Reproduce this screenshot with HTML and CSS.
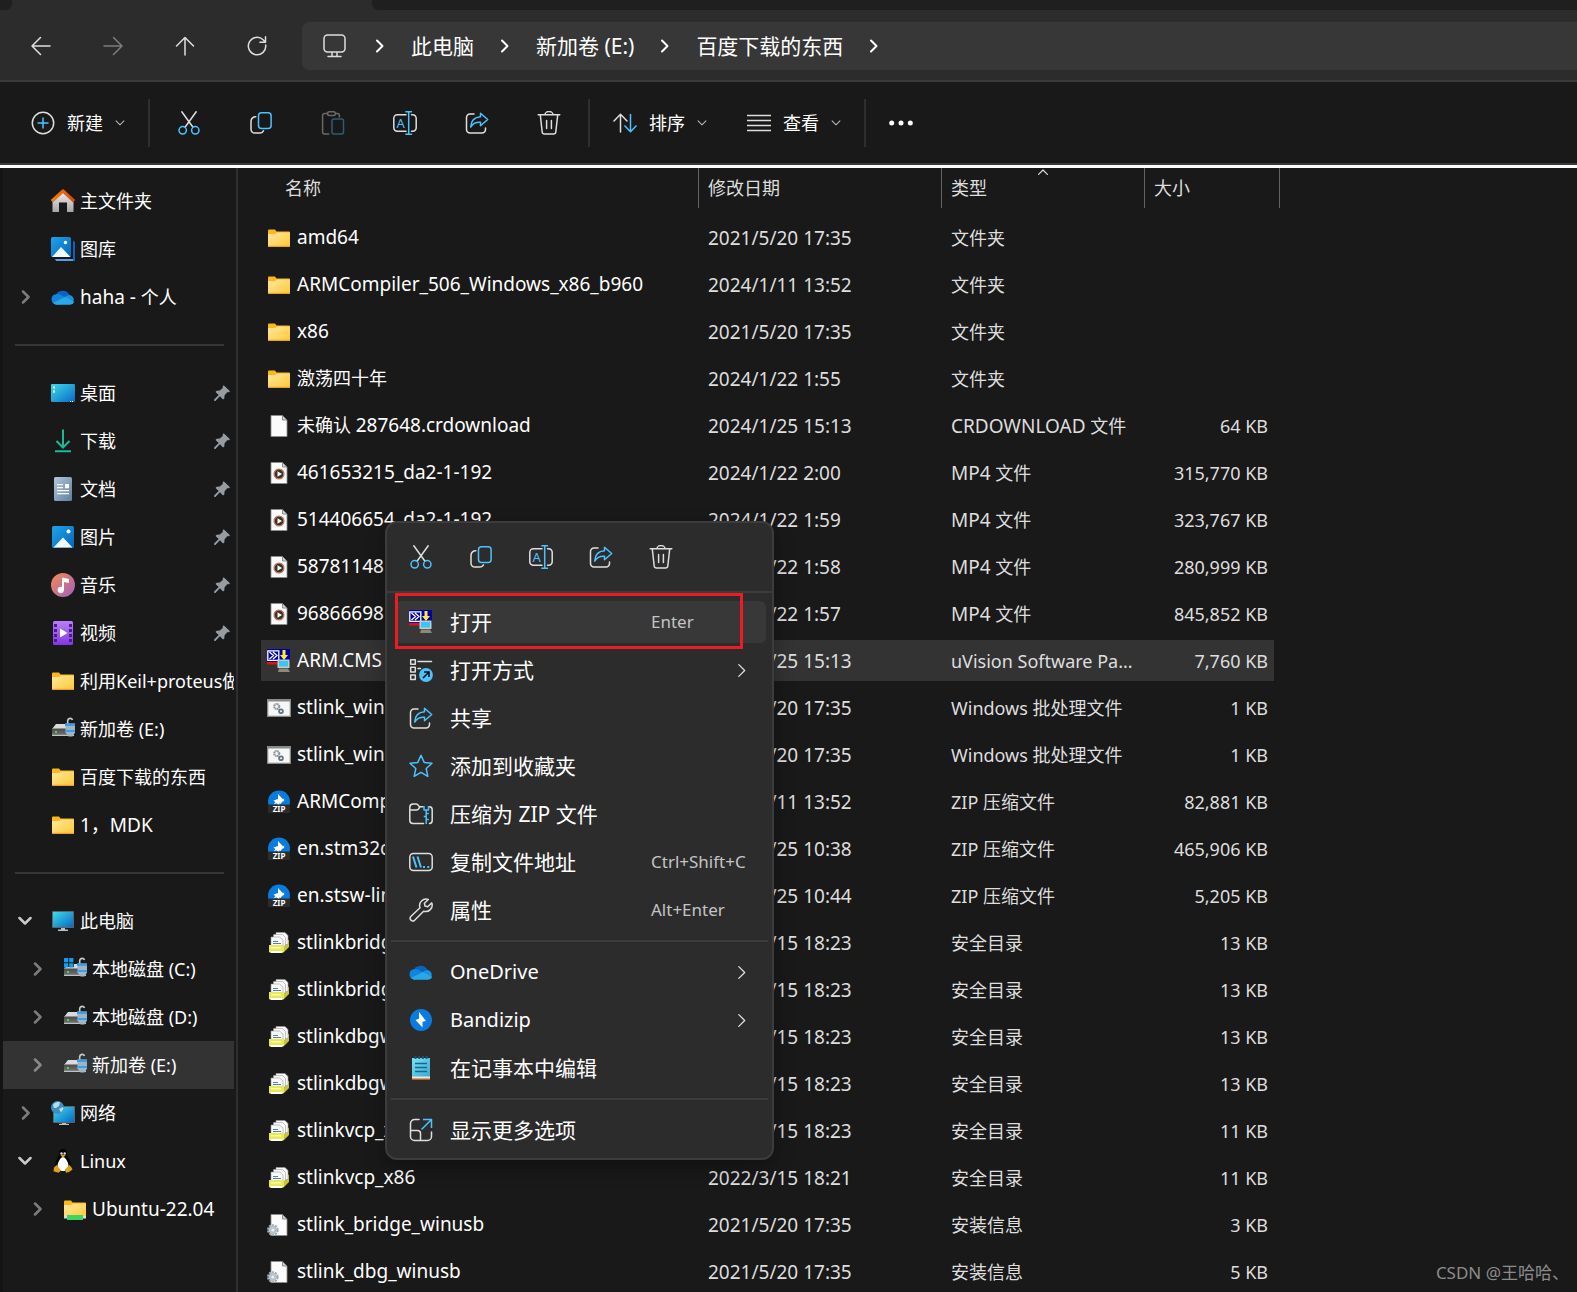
FILE: index.html
```
<!DOCTYPE html>
<html lang="zh-CN">
<head>
    <meta charset="UTF-8">
    <meta name="viewport" content="width=device-width, initial-scale=1.0">
    <title>百度下载的东西</title>
    <link rel="stylesheet" href="styles.css">
</head>
<body>
    <!-- Icon sprite -->
    <svg class="sprite" width="0" height="0" aria-hidden="true">
        <defs>
            <linearGradient id="g-folder" x1="0" y1="0" x2="1" y2="1"><stop offset="0" stop-color="#ffe7a2"/><stop offset="1" stop-color="#ffc835"/></linearGradient>
            <linearGradient id="g-blue" x1="0" y1="0" x2="1" y2="1"><stop offset="0" stop-color="#1fa4e8"/><stop offset="1" stop-color="#0565bd"/></linearGradient>
            <linearGradient id="g-screen" x1="0" y1="0" x2="1" y2="1"><stop offset="0" stop-color="#3bdcea"/><stop offset="1" stop-color="#0a68c4"/></linearGradient>
            <linearGradient id="g-music" x1="0" y1="0" x2="1" y2="1"><stop offset="0" stop-color="#f58b50"/><stop offset="1" stop-color="#a25dc0"/></linearGradient>
            <linearGradient id="g-video" x1="0" y1="0" x2="0" y2="1"><stop offset="0" stop-color="#b880f5"/><stop offset="1" stop-color="#8337e0"/></linearGradient>
            <linearGradient id="g-doc" x1="0" y1="0" x2="1" y2="1"><stop offset="0" stop-color="#b3c8dc"/><stop offset="1" stop-color="#5f7e9e"/></linearGradient>
            <linearGradient id="g-house" x1="0" y1="0" x2="0" y2="1"><stop offset="0" stop-color="#ececec"/><stop offset="1" stop-color="#a6a6a8"/></linearGradient>
            <linearGradient id="g-roof" x1="0" y1="0" x2="1" y2="0"><stop offset="0" stop-color="#f5820b"/><stop offset="1" stop-color="#d9480b"/></linearGradient>
            <linearGradient id="g-drive" x1="0" y1="0" x2="0" y2="1"><stop offset="0" stop-color="#4a4a4a"/><stop offset="1" stop-color="#777"/></linearGradient>
            <linearGradient id="g-note" x1="0" y1="0" x2="1" y2="1"><stop offset="0" stop-color="#7fe0f5"/><stop offset="1" stop-color="#3aa9cf"/></linearGradient>
        </defs>

        <!-- Line icons -->
        <symbol id="i-back" viewBox="0 0 24 24"><path class="w" d="M21 12H3.500M11.500 3.500 3 12l8.500 8.500"/></symbol>
        <symbol id="i-forward" viewBox="0 0 24 24"><path class="w" d="M3 12h17.500M12.500 3.500 21 12l-8.500 8.500"/></symbol>
        <symbol id="i-up" viewBox="0 0 24 24"><path class="w" d="M12 21V3.500M3.500 12 12 3.500l8.500 8.500"/></symbol>
        <symbol id="i-refresh" viewBox="0 0 24 24"><path class="w" d="M20.700 11a8.700 8.700 0 1 1-2.600-5.200l1.900 1.900M20.500 2.700v5.600h-5.600"/></symbol>
        <symbol id="i-monitor" viewBox="0 0 26 26"><rect class="w" x="2" y="2" width="21" height="17" rx="3.500"/><path class="w" d="M10 19.500V23M15 19.500V23M6 23.500h13"/></symbol>
        <symbol id="i-chev-r" viewBox="0 0 10 14"><path class="w" d="M2 1.500 7.500 7 2 12.500"/></symbol>
        <symbol id="i-chev-d" viewBox="0 0 14 10"><path class="w" d="M1.500 2 7 7.500 12.500 2"/></symbol>
        <symbol id="i-new" viewBox="0 0 24 24"><circle class="w" cx="12" cy="12" r="10.700"/><path class="b" d="M12 6.500v11M6.500 12h11"/></symbol>
        <symbol id="i-cut" viewBox="0 0 24 24"><path class="w" d="M4.800.8 15.800 16M19.200.8 8.200 16"/><circle class="b" cx="5.700" cy="19.300" r="3.700"/><circle class="b" cx="18.300" cy="19.300" r="3.700"/></symbol>
        <symbol id="i-copy" viewBox="0 0 24 24"><path class="w" d="M6.800 5.800A4.500 4.500 0 0 0 2 10v8.300A3.700 3.700 0 0 0 5.700 22h4.800a4.500 4.500 0 0 0 4-2.200"/><rect class="b" x="9.500" y="1.700" width="12.600" height="15.800" rx="3"/></symbol>
        <symbol id="i-paste" viewBox="0 0 24 24"><path class="w" d="M6.500 2.500H3.600a2 2 0 0 0-2 2V21a2 2 0 0 0 2 2h4.200M14.500 2.500h1.900a2 2 0 0 1 2 2V6"/><rect class="w" x="6.500" y=".8" width="8" height="3.600" rx="1.800"/><rect class="b" x="11" y="8" width="11.500" height="15" rx="2"/></symbol>
        <symbol id="i-rename" viewBox="0 0 24 24"><path class="w" d="M13 3.700H4.300A3.500 3.500 0 0 0 .8 7.200v9.600a3.500 3.500 0 0 0 3.500 3.500H13M18.500 3.700h1.200a3.500 3.500 0 0 1 3.500 3.500v9.600a3.500 3.500 0 0 1-3.500 3.500h-1.200"/><path class="b" d="M15.700 1v22M12.300.8h6.800M12.300 23.200h6.800"/><text class="icon-letter" x="3.500" y="16.500">A</text></symbol>
        <symbol id="i-share" viewBox="0 0 24 24"><path class="w" d="M9 3H5a3.500 3.500 0 0 0-3.500 3.500v12A3.500 3.500 0 0 0 5 22h12a3.500 3.500 0 0 0 3.500-3.500V17"/><path class="b" d="M15.500 2.200 22.700 8.500l-7.200 6.300v-3.500c-4.500-.3-7.500 1-9.800 4.700.3-6 3.800-9.800 9.800-10.200z"/></symbol>
        <symbol id="i-trash" viewBox="0 0 24 24"><path class="w" d="M1.200 3.800h21.600M8 3.600a4 3 0 0 1 8 0M3.300 4l1.900 17a2.300 2.300 0 0 0 2.300 2h9a2.300 2.300 0 0 0 2.300-2l1.900-17M9.600 9.500v8M14.400 9.500v8"/></symbol>
        <symbol id="i-sort" viewBox="0 0 24 24"><path class="w" d="M7.500 21V3.500M1 10l6.500-6.700L14 10"/><path class="b" d="M17.500 3v17.500M11.500 14.500l6 6.200 6-6.200"/></symbol>
        <symbol id="i-view" viewBox="0 0 24 24"><path class="w" d="M0 4.500h24M0 9.500h24M0 14.500h24M0 19.500h24"/></symbol>
        <symbol id="i-dots" viewBox="0 0 24 24"><circle fill="#fff" cx="2.700" cy="12" r="2.500"/><circle fill="#fff" cx="12" cy="12" r="2.500"/><circle fill="#fff" cx="21.300" cy="12" r="2.500"/></symbol>
        <symbol id="i-openwith" viewBox="0 0 24 24"><rect class="w" x="1.700" y="1.700" width="4.600" height="4.600"/><rect class="w" x="1.700" y="9.300" width="4.600" height="4.600"/><rect class="w" x="1.700" y="17" width="4.600" height="4.600"/><path class="w" d="M9 3.500h13.500M9 10.500h2.500"/><circle cx="17" cy="17" r="6.900" fill="#4cc2ff"/><path d="M14 20l5.800-5.800M15 14h5v5" fill="none" stroke="#111" stroke-width="1.600"/></symbol>
        <symbol id="i-star" viewBox="0 0 24 24"><path class="b" d="m12 1.200 3.200 7.200 7.800.8-5.800 5.300 1.600 7.800-6.800-4-6.800 4 1.600-7.800L1 9.200l7.800-.8z"/></symbol>
        <symbol id="i-zipfolder" viewBox="0 0 24 24"><path class="w" d="M14 4.800h-3.500L8.700 2.600A2.500 2.500 0 0 0 6.800 2H4A3.300 3.300 0 0 0 .8 5.200v13A3.300 3.300 0 0 0 4 21.500h10.500M.8 8h6.500a3 3 0 0 0 2.200-1l1.300-2M20.500 4.800a3 3 0 0 1 2.700 3v10.700a3 3 0 0 1-2.700 3"/><path class="b" d="M15 4v4h4.500V4M17.200 8v14M17.200 11.500h2.600M14.800 14.500h2.400M17.200 17.500h2.600"/></symbol>
        <symbol id="i-path" viewBox="0 0 24 24"><rect class="w" x=".8" y="3.500" width="22.400" height="17" rx="3.500"/><path class="b thick" d="M4 6.500l3.500 11M8.500 6.500l3.500 11M14 17h2M18.300 17h2"/></symbol>
        <symbol id="i-wrench" viewBox="0 0 24 24"><path class="w" d="M19.300 1.500a6.500 6.500 0 0 0-8.300 8.300L1.800 18.500a2.700 2.700 0 0 0 3.800 3.800l9-9.100a6.500 6.500 0 0 0 8.200-8.300l-4 3.800-2.800-.6-.6-2.800z"/></symbol>
        <symbol id="i-more" viewBox="0 0 24 24"><path class="w" d="M10 1.500H5.500a4 4 0 0 0-4 4v13a4 4 0 0 0 4 4h13a4 4 0 0 0 4-4V14M1.500 12.500h7a3 3 0 0 1 3 3v7"/><path class="b" d="M12.500 11.500 22 2M14 1.500h8.500V10"/></symbol>
        <symbol id="i-pin" viewBox="0 0 16 16"><path fill="#959da3" d="M9.700.3 16 6.200l-1.200 1-1.600.1-2.700 3.200-.2 3-1.200 1.100-3.200-3.300L1.400 16 0 15.700.1 14.400l4.600-4.300L1.500 6.900l1.200-1.200 3.100-.1L8.700 3l.1-1.700z"/></symbol>

        <!-- Colour icons -->
        <symbol id="c-home" viewBox="0 0 24 24"><path fill="url(#g-house)" d="M12 3 1.500 12.500V23H8v-9.500h8V23h6.500V12.500z"/><path fill="none" stroke="url(#g-roof)" stroke-width="3.200" stroke-linejoin="round" d="M.8 12.200 12 2l11.200 10.200"/></symbol>
        <symbol id="c-gallery" viewBox="0 0 24 24"><path fill="#5c9de0" d="M4 22h18v2H5z"/><path fill="#1163b8" d="M22 3.500 24 5v19h-2z"/><rect width="20" height="20" rx="1.500" fill="url(#g-blue)"/><circle cx="14.500" cy="5.500" r="1.700" fill="#fff"/><path fill="#eef8ff" d="M1 20 10 10l9.500 10z"/></symbol>
        <symbol id="c-onedrive" viewBox="0 0 24 24"><path fill="#0a63be" d="M4.500 11A7.500 7.500 0 0 1 18.500 10l-4 4z"/><path fill="#1184de" d="M5 9.200c3-.6 5 .5 9 3.200L8 19.500H5A5.200 5.200 0 0 1 5 9.200z"/><path fill="#1593e6" d="M12 13l5-2.800a5 5 0 0 1 5.500 7z"/><path fill="#28a8ea" d="M2 18l12-6 9.200 5a4.800 4.800 0 0 1-4.200 2.700H5A5 5 0 0 1 2 18z"/></symbol>
        <symbol id="c-desktop" viewBox="0 0 24 24"><rect y="3" width="24" height="18" rx="1" fill="url(#g-screen)"/><path fill="#fff" d="M2 5.500h2v2H2zM2 9.500h2v2H2zM19 20h1v1h-1zM21 20h1v1h-1z"/></symbol>
        <symbol id="c-download" viewBox="0 0 24 24"><path fill="none" stroke="#1fb894" stroke-width="2" d="M12 .5v17M5.500 12l6.500 6.500 6.500-6.500M4 22.300h16"/></symbol>
        <symbol id="c-document" viewBox="0 0 24 24"><rect x="3" width="18" height="24" rx="1.500" fill="url(#g-doc)"/><path fill="#fff" d="M6 7h6v1.300H6zM6 10h6v1.300H6zM14 7h4v4.300h-4zM6 13h12v1.300H6zM6 16h12v1.300H6z"/></symbol>
        <symbol id="c-picture" viewBox="0 0 24 24"><rect x="1" y="1" width="22" height="22" rx="1.500" fill="url(#g-blue)"/><circle cx="17.500" cy="6.500" r="2" fill="#fff"/><path fill="#f2f9ff" d="M2.500 22.500 12 12.500l9.500 10z"/></symbol>
        <symbol id="c-music" viewBox="0 0 24 24"><circle cx="12" cy="12" r="12" fill="url(#g-music)"/><path fill="#fff" d="M11 4.500 18 6v4l-5-1v8a3.200 3.200 0 1 1-2-3z"/></symbol>
        <symbol id="c-video" viewBox="0 0 24 24"><rect x="2" width="20" height="24" rx="1.500" fill="url(#g-video)"/><path fill="#4b1a8c" d="M3 3h3v3H3zM3 8h3v3H3zM3 13h3v3H3zM3 18h3v3H3zM18 3h3v3h-3zM18 8h3v3h-3zM18 13h3v3h-3zM18 18h3v3h-3z"/><path fill="#fff" d="M9 7.500v9L16.500 12z"/></symbol>
        <symbol id="c-folder" viewBox="0 0 24 24"><path fill="#fcb71c" d="M1 4.500A1 1 0 0 1 2 3.500h6l1.500 2H22a1 1 0 0 1 1 1V12H1z"/><path fill="url(#g-folder)" d="M1 8h7l2-1.500h13V20a1 1 0 0 1-1 1H2a1 1 0 0 1-1-1z"/><path fill="#e4a52a" d="M1 19.800h22V20a1 1 0 0 1-1 1H2a1 1 0 0 1-1-1z"/></symbol>
        <symbol id="c-drive" viewBox="0 0 24 24"><path fill="#d9dadd" d="M5 7h18v5H1z"/><rect x="1" y="11.500" width="22" height="7.500" rx="1" fill="url(#g-drive)"/><path fill="#bfc1c4" d="M1 17.800h22V19H1z"/><path fill="#37e03c" d="M4 14h2v2H4z"/><path fill="none" stroke="#c3ccd2" stroke-width="1.600" d="M16.700 7V3.500a2.500 2.500 0 0 1 4.800-.5"/><path fill="#9fb4c4" d="M14.500 6.500h9.500v9l-2.500 4h-4l-3-4z"/><path fill="#3c9fe6" d="M14 6.500h10v2.500H14zM14 13h10v2H14z"/></symbol>
        <symbol id="c-drive-sys" viewBox="0 0 24 24"><use href="#c-drive"/><path fill="#1a1a1a" d="M0 0h11v10H0z"/><path fill="#139cf0" d="M1 1h4.200v4.200H1zM6.200 1h4.200v4.200H6.200zM1 6.200h4.200v4.200H1zM6.200 6.200h4.200v4.200H6.200z"/></symbol>
        <symbol id="c-pc" viewBox="0 0 24 24"><rect x="1" y="2" width="22" height="17" rx="1" fill="#59666e"/><rect x="2" y="3" width="20" height="15" fill="url(#g-screen)"/><path fill="#b9c0c5" d="M10 19h4v1.500h3V22H7v-1.500h3z"/></symbol>
        <symbol id="c-network" viewBox="0 0 24 24"><rect x="2" y="5" width="22" height="17" rx="1" fill="#59666e"/><rect x="3" y="6" width="20" height="15" fill="url(#g-screen)"/><path fill="#b9c0c5" d="M11 22h4v.7h3V24H8v-1.300h3z"/><circle cx="6.500" cy="6.500" r="6.500" fill="#3f8fbd"/><path fill="#b9dcec" d="M2 4c2-3 5-3.500 7-2.500L8 5 5 7 3 7zM8 8l4-2 .5 2-2.500 3.500z"/></symbol>
        <symbol id="c-tux" viewBox="0 0 24 24"><path fill="#050505" d="M12 0c3 0 4.200 2.200 4.200 5 0 3 3.800 6.500 3.800 11.500l-2 5.500H6l-2-5.500C4 11.500 7.800 8 7.800 5c0-2.800 1.200-5 4.200-5z"/><path fill="#fff" d="M12 8c2 0 5.500 5 5.500 9 0 3.500-2.500 5-5.500 5s-5.500-1.500-5.500-5c0-4 3.500-9 5.500-9z"/><circle cx="10.500" cy="4.500" r="1.200" fill="#ddd"/><circle cx="13.700" cy="4.500" r="1.200" fill="#ddd"/><path fill="#e0a01a" d="M9.500 6.500 12 5.500l2.700 1-2.700 2zM5.500 16l4.500 5.500-2.500 2.200-5-1.500.5-3.700zM18.500 16 14 20.500l1 3.200 3-.7 3.500-2.500-1-2z"/></symbol>
        <symbol id="c-folder-net" viewBox="0 0 24 24"><use href="#c-folder"/><path fill="#dcdcdc" d="M1 19h22v2.500H1z"/><path fill="#3fd65f" d="M4 18h16v5H4z"/></symbol>
        <symbol id="c-file" viewBox="0 0 24 24"><path fill="#fbfbfb" stroke="#8d8d8d" stroke-width=".8" d="M4 1.500h11.500l4.500 4.500V22.500H4z"/><path fill="#d3d3d3" stroke="#777" stroke-width=".8" d="M15.500 1.500V6H20z"/></symbol>
        <symbol id="c-mp4" viewBox="0 0 24 24"><use href="#c-file"/><circle cx="12" cy="13" r="4.900" fill="#333" stroke="#c97650" stroke-width="1.300"/><path fill="#fff" d="M10.500 10.300v5.400L15 13z"/></symbol>
        <symbol id="c-keil" viewBox="0 0 24 24"><path fill="#0000a8" d="M0 0h23v13H0z"/><path fill="#e01010" d="M0 13h13v2.500H0z"/><path fill="none" stroke="#fff" stroke-width="1.300" d="M.8 1.800h11v9.500H.8zM2.500 3l4 3.500-4 3.500M6 3l4 3.500L6 10"/><path fill="#ffee30" d="M15.500 1h3v5H21l-4 5-4-5h2.500z"/><path fill="#c9c9c9" d="M10.500 10.500h12v8.500h-12z"/><path fill="#35c8f5" d="M12 12h9v5.500h-9z"/><path fill="#8f8878" d="M12 19.500h9l2 3.500H11z"/></symbol>
        <symbol id="c-bat" viewBox="0 0 24 24"><path fill="#8a8a86" d="M0 3h24v18H0z"/><path fill="#f5f7f8" d="M1.300 5.500h21.400v14.200H1.300z"/><circle cx="9.700" cy="10.500" r="2.500" fill="none" stroke="#8b979f" stroke-width="2.200" stroke-dasharray="1.500 .5"/><circle cx="14" cy="15.300" r="1.900" fill="none" stroke="#66747d" stroke-width="1.800"/></symbol>
        <symbol id="c-zip" viewBox="0 0 24 24"><circle cx="12" cy="11.500" r="11" fill="#0a7ce0"/><path fill="#fff" d="M11.300 4l1.500 5.300 4.700-.6-4 5.300-1.800-1.500-5.200 2 5-6z"/><path fill="#fff" d="M11 4v5l-4.500 1.500 6 5.500v-4l5-1z"/><rect x="1" y="14.500" width="22" height="8.500" rx="1" fill="#2c2c2c"/><text class="zip-letter" x="12" y="21.800">ZIP</text></symbol>
        <symbol id="c-cat" viewBox="0 0 24 24"><path fill="#c6c637" d="M17 12l5-3.500v7.500L17 21z"/><path fill="#fafafa" stroke="#9b9b9b" stroke-width=".6" d="M9 1.500h9l3 3v9H9z"/><path fill="#fafafa" stroke="#9b9b9b" stroke-width=".6" d="M6.500 3.500h9l3 3V15h-12z"/><path fill="#fafafa" stroke="#9b9b9b" stroke-width=".6" d="M4 6h8.500l3.500 3v6H4z"/><path stroke="#4c83bd" d="M6 10.500h5M6 12.500h8"/><path fill="#e9e857" d="M2 14h15v7.300H2z"/><path fill="#fff" d="M3.500 20h12v2h-12z"/><path fill="#fbf9ae" d="M4 16h10v1.500H4z"/></symbol>
        <symbol id="c-inf" viewBox="0 0 24 24"><use href="#c-file"/><circle cx="5.800" cy="17" r="4.600" fill="none" stroke="#9faab4" stroke-width="2.400" stroke-dasharray="2 .9"/><circle cx="5.800" cy="17" r="4.200" fill="#b8c3cc"/><circle cx="5.800" cy="17" r="1.500" fill="#eee"/></symbol>
        <symbol id="c-bandizip" viewBox="0 0 24 24"><circle cx="12" cy="12" r="11" fill="#0a7ce0"/><path fill="#fff" d="M10 4v6.800L6.500 12l7 7.500v-5.700l3.500-.8z"/></symbol>
        <symbol id="c-notepad" viewBox="0 0 24 24"><path fill="#b55f16" d="M3 22h18v2H3z"/><path fill="#e9e9e9" d="M3 20h18v2.500H3z"/><path fill="url(#g-note)" d="M3 2h18v18.500H3z"/><path stroke="#0d6c8e" stroke-width="1.600" d="M6 7.500h12M6 11.500h12M6 15.500h12"/><path stroke="#135b74" stroke-width="1.800" d="M6.500 0v3M10.200 0v3M13.900 0v3M17.600 0v3"/></symbol>
    </svg>

    <div class="explorer">
        <div class="tab-strip"><span class="tab"></span><span class="tab-active"></span><span class="tab tab-rest"></span></div>

        <nav class="nav-bar" aria-label="导航">
            <div class="nav-buttons">
                <button type="button" aria-label="后退"><svg class="icon"><use href="#i-back"/></svg></button>
                <button type="button" aria-label="前进" disabled><svg class="icon"><use href="#i-forward"/></svg></button>
                <button type="button" aria-label="向上"><svg class="icon"><use href="#i-up"/></svg></button>
                <button type="button" aria-label="刷新"><svg class="icon"><use href="#i-refresh"/></svg></button>
            </div>
            <div class="address">
                <svg class="icon-pc"><use href="#i-monitor"/></svg>
                <svg class="crumb-sep"><use href="#i-chev-r"/></svg>
                <a href="#">此电脑</a>
                <svg class="crumb-sep"><use href="#i-chev-r"/></svg>
                <a href="#">新加卷 (E:)</a>
                <svg class="crumb-sep"><use href="#i-chev-r"/></svg>
                <a href="#">百度下载的东西</a>
                <svg class="crumb-sep"><use href="#i-chev-r"/></svg>
            </div>
        </nav>

        <div class="toolbar">
            <button type="button" class="drop"><svg class="icon"><use href="#i-new"/></svg><span>新建</span><svg class="drop-arrow"><use href="#i-chev-d"/></svg></button>
            <span class="divider"></span>
            <button type="button" class="tool" aria-label="剪切"><svg class="icon"><use href="#i-cut"/></svg></button>
            <button type="button" class="tool" aria-label="复制"><svg class="icon"><use href="#i-copy"/></svg></button>
            <button type="button" class="tool" aria-label="粘贴" disabled><svg class="icon"><use href="#i-paste"/></svg></button>
            <button type="button" class="tool" aria-label="重命名"><svg class="icon"><use href="#i-rename"/></svg></button>
            <button type="button" class="tool" aria-label="共享"><svg class="icon"><use href="#i-share"/></svg></button>
            <button type="button" class="tool" aria-label="删除"><svg class="icon"><use href="#i-trash"/></svg></button>
            <span class="divider"></span>
            <button type="button" class="drop"><svg class="icon"><use href="#i-sort"/></svg><span>排序</span><svg class="drop-arrow"><use href="#i-chev-d"/></svg></button>
            <button type="button" class="drop"><svg class="icon"><use href="#i-view"/></svg><span>查看</span><svg class="drop-arrow"><use href="#i-chev-d"/></svg></button>
            <span class="divider"></span>
            <button type="button" class="tool more" aria-label="更多"><svg class="icon"><use href="#i-dots"/></svg></button>
        </div>

        <div class="content">
            <aside class="sidebar">
                <a href="#" class="side-item"><svg class="icon"><use href="#c-home"/></svg><span class="label">主文件夹</span></a>
                <a href="#" class="side-item"><svg class="icon"><use href="#c-gallery"/></svg><span class="label">图库</span></a>
                <a href="#" class="side-item"><svg class="twist"><use href="#i-chev-r"/></svg><svg class="icon"><use href="#c-onedrive"/></svg><span class="label"><span class="latin">haha - </span>个人</span></a>
                <hr>
                <a href="#" class="side-item"><svg class="icon"><use href="#c-desktop"/></svg><span class="label">桌面</span><svg class="pin"><use href="#i-pin"/></svg></a>
                <a href="#" class="side-item"><svg class="icon"><use href="#c-download"/></svg><span class="label">下载</span><svg class="pin"><use href="#i-pin"/></svg></a>
                <a href="#" class="side-item"><svg class="icon"><use href="#c-document"/></svg><span class="label">文档</span><svg class="pin"><use href="#i-pin"/></svg></a>
                <a href="#" class="side-item"><svg class="icon"><use href="#c-picture"/></svg><span class="label">图片</span><svg class="pin"><use href="#i-pin"/></svg></a>
                <a href="#" class="side-item"><svg class="icon"><use href="#c-music"/></svg><span class="label">音乐</span><svg class="pin"><use href="#i-pin"/></svg></a>
                <a href="#" class="side-item"><svg class="icon"><use href="#c-video"/></svg><span class="label">视频</span><svg class="pin"><use href="#i-pin"/></svg></a>
                <a href="#" class="side-item"><svg class="icon"><use href="#c-folder"/></svg><span class="label">利用Keil+proteus做</span></a>
                <a href="#" class="side-item"><svg class="icon"><use href="#c-drive"/></svg><span class="label">新加卷 (E:)</span></a>
                <a href="#" class="side-item"><svg class="icon"><use href="#c-folder"/></svg><span class="label">百度下载的东西</span></a>
                <a href="#" class="side-item"><svg class="icon"><use href="#c-folder"/></svg><span class="label latin">1，MDK</span></a>
                <hr>
                <a href="#" class="side-item"><svg class="twist open"><use href="#i-chev-d"/></svg><svg class="icon"><use href="#c-pc"/></svg><span class="label">此电脑</span></a>
                <a href="#" class="side-item child"><svg class="twist"><use href="#i-chev-r"/></svg><svg class="icon"><use href="#c-drive-sys"/></svg><span class="label">本地磁盘 (C:)</span></a>
                <a href="#" class="side-item child"><svg class="twist"><use href="#i-chev-r"/></svg><svg class="icon"><use href="#c-drive"/></svg><span class="label">本地磁盘 (D:)</span></a>
                <a href="#" class="side-item child current"><svg class="twist"><use href="#i-chev-r"/></svg><svg class="icon"><use href="#c-drive"/></svg><span class="label">新加卷 (E:)</span></a>
                <a href="#" class="side-item"><svg class="twist"><use href="#i-chev-r"/></svg><svg class="icon"><use href="#c-network"/></svg><span class="label">网络</span></a>
                <a href="#" class="side-item"><svg class="twist open"><use href="#i-chev-d"/></svg><svg class="icon"><use href="#c-tux"/></svg><span class="label">Linux</span></a>
                <a href="#" class="side-item child"><svg class="twist"><use href="#i-chev-r"/></svg><svg class="icon"><use href="#c-folder-net"/></svg><span class="label latin">Ubuntu-22.04</span></a>
            </aside>

            <main class="files">
                <table>
                    <colgroup><col class="col-name"><col class="col-date"><col class="col-type"><col class="col-size"></colgroup>
                    <thead>
                        <tr>
                            <th class="name"><div class="head">名称</div></th>
                            <th><div class="head">修改日期</div></th>
                            <th><div class="head">类型<svg class="sort-mark"><use href="#i-chev-d"/></svg></div></th>
                            <th><div class="head">大小</div></th>
                        </tr>
                    </thead>
                    <tbody>
                        <tr><td class="name"><svg class="icon"><use href="#c-folder"/></svg>amd64</td><td>2021/5/20 17:35</td><td class="type">文件夹</td><td class="size"></td></tr>
                        <tr><td class="name"><svg class="icon"><use href="#c-folder"/></svg>ARMCompiler_506_Windows_x86_b960</td><td>2024/1/11 13:52</td><td class="type">文件夹</td><td class="size"></td></tr>
                        <tr><td class="name"><svg class="icon"><use href="#c-folder"/></svg>x86</td><td>2021/5/20 17:35</td><td class="type">文件夹</td><td class="size"></td></tr>
                        <tr><td class="name cjk"><svg class="icon"><use href="#c-folder"/></svg>激荡四十年</td><td>2024/1/22 1:55</td><td class="type">文件夹</td><td class="size"></td></tr>
                        <tr><td class="name cjk"><svg class="icon"><use href="#c-file"/></svg>未确认 <span class="latin">287648.crdownload</span></td><td>2024/1/25 15:13</td><td class="type"><span class="latin">CRDOWNLOAD</span> 文件</td><td class="size">64 KB</td></tr>
                        <tr><td class="name"><svg class="icon"><use href="#c-mp4"/></svg>461653215_da2-1-192</td><td>2024/1/22 2:00</td><td class="type"><span class="latin">MP4</span> 文件</td><td class="size">315,770 KB</td></tr>
                        <tr><td class="name"><svg class="icon"><use href="#c-mp4"/></svg>514406654_da2-1-192</td><td>2024/1/22 1:59</td><td class="type"><span class="latin">MP4</span> 文件</td><td class="size">323,767 KB</td></tr>
                        <tr><td class="name"><svg class="icon"><use href="#c-mp4"/></svg>58781148</td><td>2024/1/22 1:58</td><td class="type"><span class="latin">MP4</span> 文件</td><td class="size">280,999 KB</td></tr>
                        <tr><td class="name"><svg class="icon"><use href="#c-mp4"/></svg>96866698</td><td>2024/1/22 1:57</td><td class="type"><span class="latin">MP4</span> 文件</td><td class="size">845,852 KB</td></tr>
                        <tr class="selected"><td class="name"><svg class="icon"><use href="#c-keil"/></svg>ARM.CMS</td><td>2024/1/25 15:13</td><td class="type">uVision Software Pa...</td><td class="size">7,760 KB</td></tr>
                        <tr><td class="name"><svg class="icon"><use href="#c-bat"/></svg>stlink_winusb</td><td>2021/5/20 17:35</td><td class="type">Windows 批处理文件</td><td class="size">1 KB</td></tr>
                        <tr><td class="name"><svg class="icon"><use href="#c-bat"/></svg>stlink_winusb</td><td>2021/5/20 17:35</td><td class="type">Windows 批处理文件</td><td class="size">1 KB</td></tr>
                        <tr><td class="name"><svg class="icon"><use href="#c-zip"/></svg>ARMCompiler</td><td>2024/1/11 13:52</td><td class="type">ZIP 压缩文件</td><td class="size">82,881 KB</td></tr>
                        <tr><td class="name"><svg class="icon"><use href="#c-zip"/></svg>en.stm32cube</td><td>2024/1/25 10:38</td><td class="type">ZIP 压缩文件</td><td class="size">465,906 KB</td></tr>
                        <tr><td class="name"><svg class="icon"><use href="#c-zip"/></svg>en.stsw-link</td><td>2024/1/25 10:44</td><td class="type">ZIP 压缩文件</td><td class="size">5,205 KB</td></tr>
                        <tr><td class="name"><svg class="icon"><use href="#c-cat"/></svg>stlinkbridge</td><td>2022/3/15 18:23</td><td class="type">安全目录</td><td class="size">13 KB</td></tr>
                        <tr><td class="name"><svg class="icon"><use href="#c-cat"/></svg>stlinkbridge</td><td>2022/3/15 18:23</td><td class="type">安全目录</td><td class="size">13 KB</td></tr>
                        <tr><td class="name"><svg class="icon"><use href="#c-cat"/></svg>stlinkdbgwinusb</td><td>2022/3/15 18:23</td><td class="type">安全目录</td><td class="size">13 KB</td></tr>
                        <tr><td class="name"><svg class="icon"><use href="#c-cat"/></svg>stlinkdbgwinusb</td><td>2022/3/15 18:23</td><td class="type">安全目录</td><td class="size">13 KB</td></tr>
                        <tr><td class="name"><svg class="icon"><use href="#c-cat"/></svg>stlinkvcp_x64</td><td>2022/3/15 18:23</td><td class="type">安全目录</td><td class="size">11 KB</td></tr>
                        <tr><td class="name"><svg class="icon"><use href="#c-cat"/></svg>stlinkvcp_x86</td><td>2022/3/15 18:21</td><td class="type">安全目录</td><td class="size">11 KB</td></tr>
                        <tr><td class="name"><svg class="icon"><use href="#c-inf"/></svg>stlink_bridge_winusb</td><td>2021/5/20 17:35</td><td class="type">安装信息</td><td class="size">3 KB</td></tr>
                        <tr><td class="name"><svg class="icon"><use href="#c-inf"/></svg>stlink_dbg_winusb</td><td>2021/5/20 17:35</td><td class="type">安装信息</td><td class="size">5 KB</td></tr>
                    </tbody>
                </table>
            </main>
        </div>

        <!-- Right click menu -->
        <div class="context-menu">
            <div class="quick">
                <button type="button" aria-label="剪切"><svg class="icon"><use href="#i-cut"/></svg></button>
                <button type="button" aria-label="复制"><svg class="icon"><use href="#i-copy"/></svg></button>
                <button type="button" aria-label="重命名"><svg class="icon"><use href="#i-rename"/></svg></button>
                <button type="button" aria-label="共享"><svg class="icon"><use href="#i-share"/></svg></button>
                <button type="button" aria-label="删除"><svg class="icon"><use href="#i-trash"/></svg></button>
            </div>
            <ul>
                <li><button type="button" class="active"><svg class="icon"><use href="#c-keil"/></svg><span>打开</span><kbd>Enter</kbd></button><span class="mark"></span></li>
                <li><button type="button"><svg class="icon"><use href="#i-openwith"/></svg><span>打开方式</span><svg class="sub"><use href="#i-chev-r"/></svg></button></li>
                <li><button type="button"><svg class="icon"><use href="#i-share"/></svg><span>共享</span></button></li>
                <li><button type="button"><svg class="icon"><use href="#i-star"/></svg><span>添加到收藏夹</span></button></li>
                <li><button type="button"><svg class="icon"><use href="#i-zipfolder"/></svg><span>压缩为 ZIP 文件</span></button></li>
                <li><button type="button"><svg class="icon"><use href="#i-path"/></svg><span>复制文件地址</span><kbd>Ctrl+Shift+C</kbd></button></li>
                <li><button type="button"><svg class="icon"><use href="#i-wrench"/></svg><span>属性</span><kbd>Alt+Enter</kbd></button></li>
                <li class="line"></li>
                <li><button type="button"><svg class="icon"><use href="#c-onedrive"/></svg><span class="app-name">OneDrive</span><svg class="sub"><use href="#i-chev-r"/></svg></button></li>
                <li><button type="button"><svg class="icon"><use href="#c-bandizip"/></svg><span class="app-name">Bandizip</span><svg class="sub"><use href="#i-chev-r"/></svg></button></li>
                <li><button type="button"><svg class="icon"><use href="#c-notepad"/></svg><span>在记事本中编辑</span></button></li>
                <li class="line"></li>
                <li><button type="button"><svg class="icon"><use href="#i-more"/></svg><span>显示更多选项</span></button></li>
            </ul>
        </div>

        <div class="watermark">CSDN @王哈哈、</div>
    </div>
</body>
</html>
```
FILE: styles.css
```
* {
    margin: 0;
    padding: 0;
    box-sizing: border-box;
}

body {
    font-family: "Noto Sans", "Noto Sans CJK SC", sans-serif;
    font-size: 18px;
    line-height: 24px;
    background: #191919;
    color: #fff;
    overflow: hidden;
}

a {
    color: inherit;
    text-decoration: none;
}

button {
    font: inherit;
    color: inherit;
    background: none;
    border: none;
}

svg {
    display: block;
    flex: none;
}

.sprite {
    position: absolute;
}

/* strokes shared by the line icons */
.w {
    fill: none;
    stroke: var(--line-color, #dedede);
    stroke-width: var(--line-width, 1.5);
    stroke-linecap: round;
    stroke-linejoin: round;
}

.b {
    fill: none;
    stroke: #4cc2ff;
    stroke-width: 1.5;
    stroke-linejoin: round;
}

.thick {
    stroke-width: 2;
}

.icon-letter {
    fill: #4cc2ff;
    font-size: 13px;
}

.zip-letter {
    fill: #fff;
    font-size: 8px;
    font-weight: bold;
    text-anchor: middle;
}

.icon {
    width: 24px;
    height: 24px;
}

.explorer {
    position: relative;
    display: flex;
    flex-direction: column;
    height: 100vh;
    overflow: hidden;
}

/* Tabs */
.tab-strip {
    display: flex;
    height: 10px;
    background: #2c2c2c;
}

.tab {
    width: 12px;
    background: #1f1f1f;
    border-bottom-right-radius: 6px;
}

.tab-active {
    width: 360px;
}

.tab-rest {
    flex: 1;
    border-radius: 0 0 0 6px;
}

/* Navigation */
.nav-bar {
    display: flex;
    align-items: center;
    height: 72px;
    padding: 2px 0 0 17px;
    background: #2c2c2c;
    border-bottom: 2px solid #3a3a3a;
}

.nav-buttons {
    display: flex;
    gap: 24px;
    width: 285px;
}

.nav-buttons button {
    display: flex;
    align-items: center;
    justify-content: center;
    width: 48px;
    height: 48px;
}

.nav-buttons button:disabled {
    opacity: 0.45;
}

.address {
    display: flex;
    flex: 1;
    align-items: center;
    gap: 26px;
    height: 48px;
    padding-left: 19px;
    background: #373737;
    border-radius: 7px 0 0 7px;
    font-size: 21px;
}

.icon-pc {
    width: 28px;
    height: 26px;
}

.crumb-sep {
    width: 10px;
    height: 14px;
    --line-color: #fff;
    --line-width: 2;
}

/* Toolbar */
.toolbar {
    display: flex;
    align-items: center;
    height: 83px;
    padding-left: 11px;
    border-bottom: 2px solid #3a3a3a;
}

.drop {
    display: flex;
    align-items: center;
    gap: 12px;
    height: 48px;
    padding: 0 20px;
}

.drop-arrow {
    width: 10px;
    height: 8px;
    opacity: 0.8;
}

.tool {
    display: flex;
    align-items: center;
    justify-content: center;
    width: 72px;
    height: 48px;
}

.tool.more {
    width: 64px;
}

.tool:disabled {
    opacity: 0.4;
}

.divider {
    width: 2px;
    height: 48px;
    margin: 0 3px;
    background: #2e2e2e;
}

/* Body */
.content {
    display: flex;
    flex: 1;
    min-height: 0;
    border-top: 3px solid #fff;
}

.sidebar {
    width: 238px;
    padding: 9px 2px 0 0;
    border-left: 3px solid #141414;
    border-right: 2px solid #2e2e2e;
    overflow: hidden;
}

.side-item {
    position: relative;
    display: flex;
    align-items: center;
    gap: 5px;
    height: 48px;
    padding-left: 48px;
}

.side-item.child {
    padding-left: 60px;
}

.side-item.current {
    background: #333;
}

.label {
    flex: 1;
    white-space: nowrap;
    overflow: hidden;
}

.twist {
    position: absolute;
    left: 18px;
    width: 10px;
    height: 14px;
    opacity: 0.5;
    --line-width: 2.5;
}

.child .twist {
    left: 30px;
}

.twist.open {
    left: 15px;
    width: 14px;
    height: 10px;
    opacity: 0.9;
}

.pin {
    width: 16px;
    height: 16px;
    margin-right: 4px;
}

.sidebar hr {
    height: 2px;
    margin: 23px 10px 23px 12px;
    border: none;
    background: #363636;
}

.latin {
    font-size: 19px;
}

/* File list */
.files {
    flex: 1;
    padding-left: 23px;
    overflow: hidden;
}

table {
    table-layout: fixed;
    width: 1019px;
    border-spacing: 0;
}

.col-name {
    width: 438px;
}

.col-date {
    width: 243px;
}

.col-type {
    width: 203px;
}

.col-size {
    width: 135px;
}

th {
    height: 46px;
    font-weight: normal;
    text-align: left;
    vertical-align: top;
    color: #dedede;
}

.head {
    position: relative;
    height: 40px;
    padding: 8px 9px 0;
    border-right: 1px solid #636363;
}

th.name .head {
    padding-left: 24px;
}

.sort-mark {
    position: absolute;
    top: 0;
    left: 95px;
    width: 12px;
    height: 8px;
    transform: rotate(180deg);
}

td {
    height: 47px;
    padding: 0 9px;
    border: 3px solid transparent;
    border-width: 3px 0;
    background-clip: padding-box;
    font-size: 19px;
    white-space: nowrap;
    color: #dedede;
}

td.name {
    padding: 0 6px;
    color: #fff;
}

td.name .icon {
    display: inline-block;
    margin-right: 6px;
    vertical-align: -6px;
}

td.cjk,
td.type {
    font-size: 18px;
}

td.size {
    padding-right: 6px;
    border-right-width: 6px;
    font-size: 18px;
    text-align: right;
}

.selected td {
    background-color: #333;
}

/* Context menu */
.context-menu {
    position: absolute;
    top: 521px;
    left: 385px;
    width: 389px;
    padding-bottom: 4px;
    background: #2c2c2c;
    border: 2px solid #3c3c3c;
    border-radius: 12px;
    box-shadow: 0 8px 20px rgba(0, 0, 0, 0.3);
    font-size: 21px;
}

.quick {
    display: flex;
    height: 70px;
    padding-left: 4px;
    border-bottom: 2px solid #3c3c3c;
}

.quick button {
    display: flex;
    align-items: center;
    justify-content: center;
    width: 60px;
}

.context-menu ul {
    padding-top: 5px;
    list-style: none;
}

.context-menu li {
    position: relative;
    padding: 3px 6px 3px 8px;
}

.context-menu li button {
    display: grid;
    grid-template-columns: 24px 184px 1fr;
    align-items: center;
    gap: 17px;
    width: 100%;
    height: 42px;
    padding: 0 18px 0 14px;
    border-radius: 6px;
    text-align: left;
    white-space: nowrap;
}

.context-menu li button.active {
    background: #383838;
}

.context-menu .line {
    height: 2px;
    margin: 6px 4px;
    padding: 0;
    background: #3c3c3c;
}

.app-name {
    font-size: 20px;
}

kbd {
    font-family: inherit;
    font-size: 17px;
    color: #c4c4c4;
}

.sub {
    width: 12px;
    height: 15px;
    justify-self: end;
    --line-width: 1.2;
}

.mark {
    position: absolute;
    top: -5px;
    left: 8px;
    width: 348px;
    height: 56px;
    border: 3px solid #ec1c24;
}

.watermark {
    position: absolute;
    right: 8px;
    bottom: 7px;
    font-size: 17px;
    color: #8c8c8c;
}
```
